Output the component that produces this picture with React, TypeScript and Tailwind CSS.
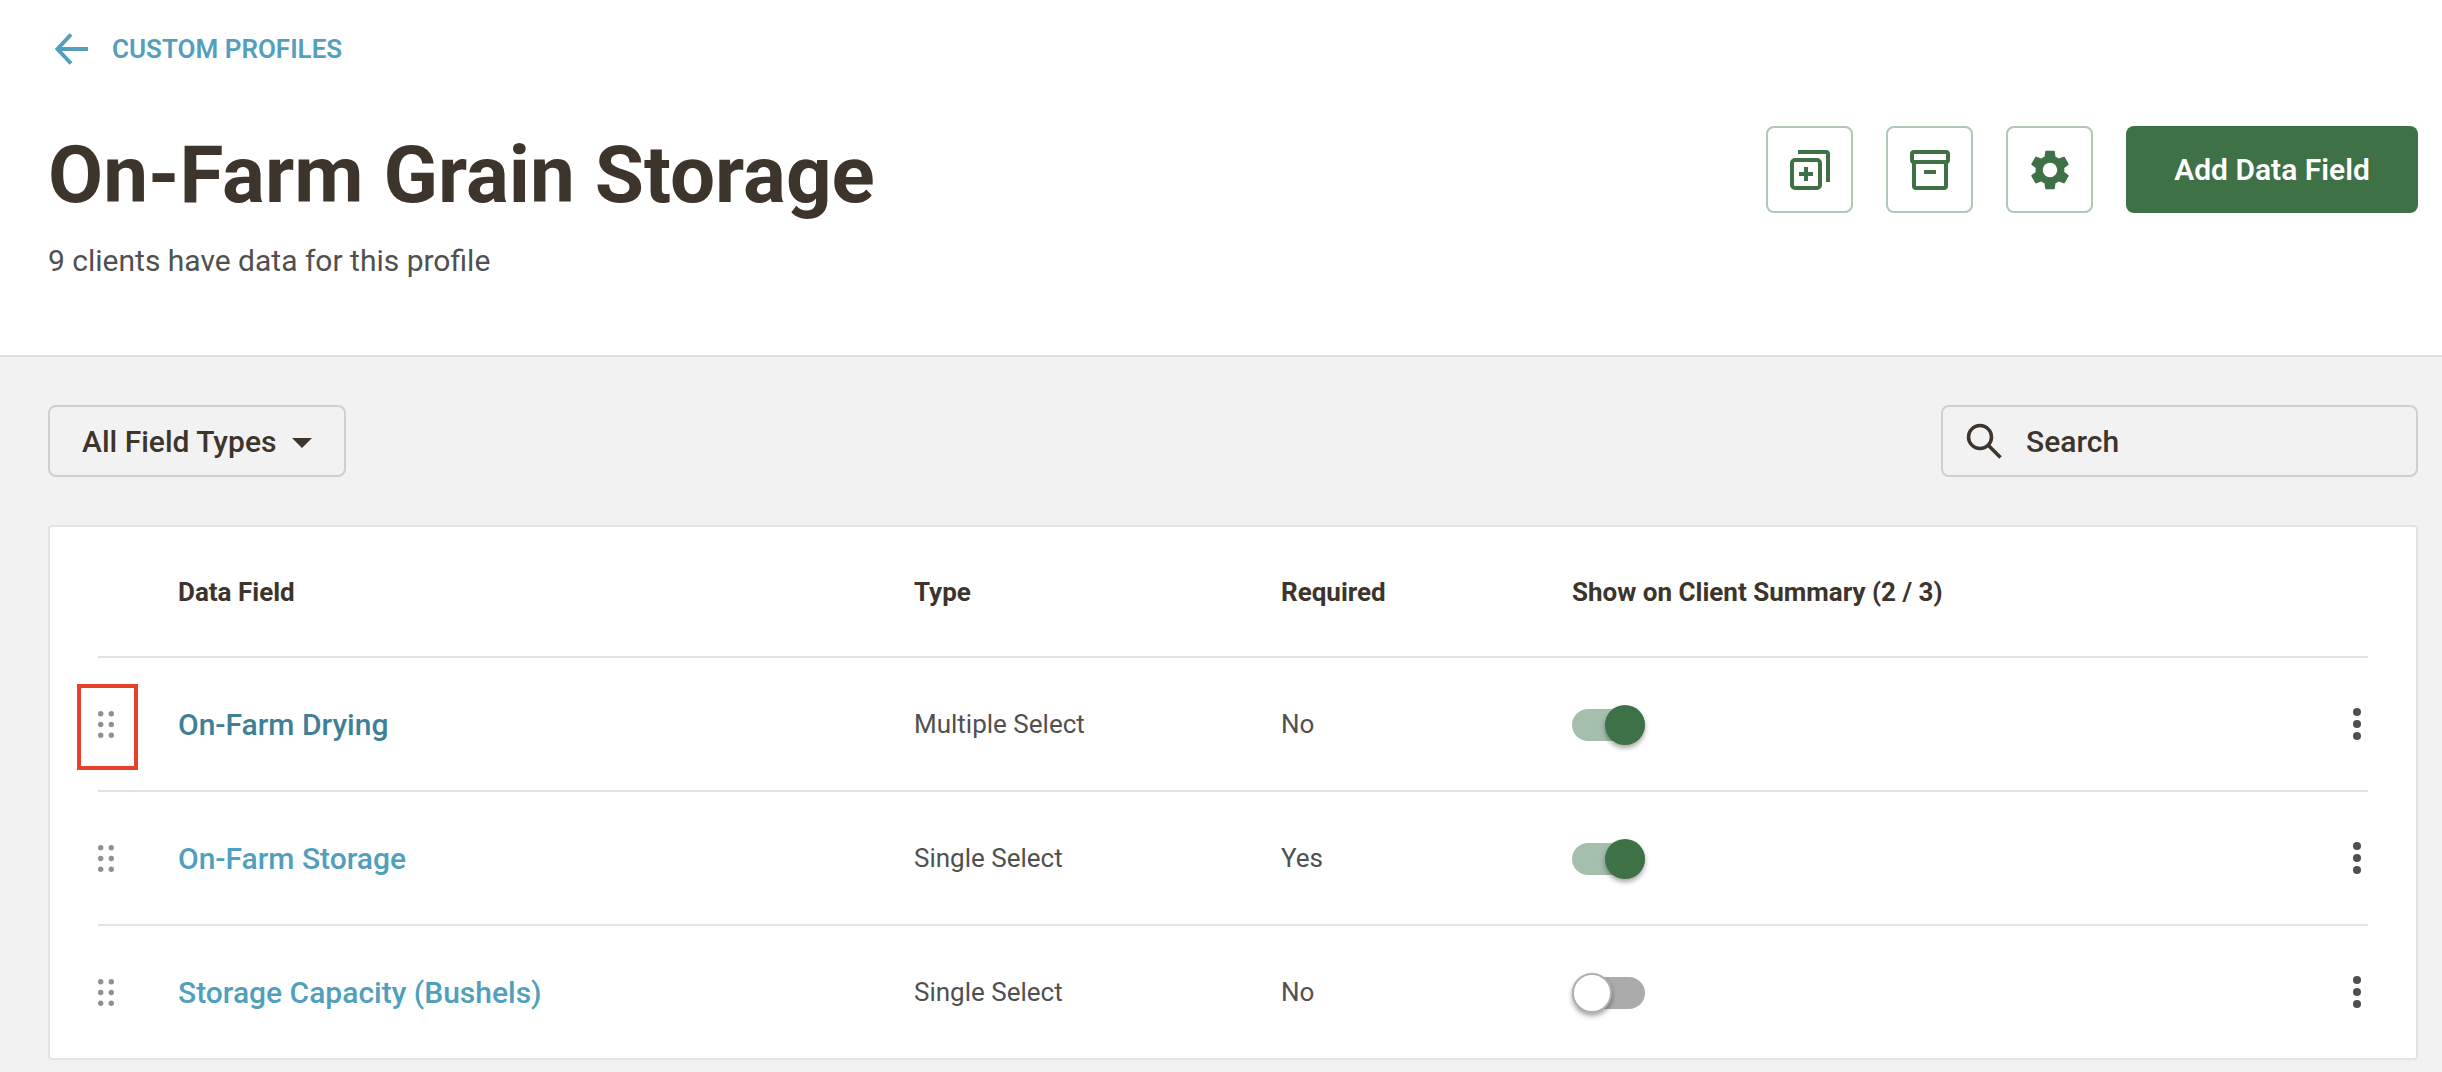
import { MdSettings } from "react-icons/md";

const rows = [
  { name: "On-Farm Drying", type: "Multiple Select", required: "No", on: true, active: true },
  { name: "On-Farm Storage", type: "Single Select", required: "Yes", on: true, active: false },
  { name: "Storage Capacity (Bushels)", type: "Single Select", required: "No", on: false, active: false },
];

function DragDots() {
  return (
    <svg width="16" height="27" viewBox="0 0 16 27" fill="#909090" aria-hidden="true">
      <circle cx="2.700" cy="2.700" r="2.700" />
      <circle cx="13.300" cy="2.700" r="2.700" />
      <circle cx="2.700" cy="13.500" r="2.700" />
      <circle cx="13.300" cy="13.500" r="2.700" />
      <circle cx="2.700" cy="24.300" r="2.700" />
      <circle cx="13.300" cy="24.300" r="2.700" />
    </svg>
  );
}

function Kebab() {
  return (
    <svg width="10" height="32" viewBox="0 0 10 32" fill="#4f4f4f" aria-hidden="true">
      <circle cx="5" cy="4" r="4" />
      <circle cx="5" cy="16" r="4" />
      <circle cx="5" cy="28" r="4" />
    </svg>
  );
}

function Toggle({ on }: { on: boolean }) {
  return (
    <div className={`flex items-center w-[73px] h-[32px] mt-[2px] rounded-full ${on ? "justify-end bg-[#a5bfad]" : "justify-start bg-[#ababab]"}`}>
      <div
        className={`w-[40px] h-[40px] rounded-full shadow-[0_3px_5px_rgba(0,0,0,0.35)] ${
          on ? "bg-[#3e7146]" : "bg-white border-2 border-[#b0b0b0]"
        }`}
      />
    </div>
  );
}

function IconButton({ children }: { children: React.ReactNode }) {
  return (
    <button className="flex items-center justify-center w-[87px] h-[87px] rounded-[8px] border-2 border-[#b0c8b4] bg-white">
      {children}
    </button>
  );
}

export default function App() {
  return (
    <div className="min-h-screen bg-[#f2f2f2] font-['Roboto',sans-serif]">
      {/* Header */}
      <div className="bg-white border-b-2 border-[#e0e0e0] h-[357px] pl-[48px] pr-[24px] pt-[25px]">
        <div className="flex items-center gap-[23px] h-[48px] text-[#559fbd]">
          <svg width="34" height="32" viewBox="0 0 34 32" fill="none" stroke="currentColor" strokeWidth="4" className="ml-[7px]" aria-hidden="true">
            <path d="M33 16H3M16 1.500 2.500 16 16 30.500" />
          </svg>
          <span className="text-[26px] font-semibold uppercase">Custom Profiles</span>
        </div>
        <div className="flex items-start justify-between mt-[53px]">
          <div>
            <h1 className="text-[80px] leading-[94px] font-bold text-[#3d342c] mt-[2px]">On-Farm Grain Storage</h1>
            <p className="text-[30px] leading-[36px] text-[#505050] mt-[21px]">9 clients have data for this profile</p>
          </div>
          <div className="flex items-center gap-[33px]">
            <IconButton>
              <svg width="40" height="40" viewBox="0 0 40 40" fill="none" stroke="#3e7146" strokeWidth="4" aria-hidden="true">
                <path d="M8 2h28a2 2 0 0 1 2 2v28" />
                <rect x="2" y="10" width="28" height="28" rx="3" />
                <path d="M16 17v14M9 24h14" />
              </svg>
            </IconButton>
            <IconButton>
              <svg width="40" height="40" viewBox="0 0 40 40" fill="none" stroke="#3e7146" strokeWidth="4" aria-hidden="true">
                <rect x="2" y="2" width="36" height="10" rx="2" />
                <path d="M4 12v24a2 2 0 0 0 2 2h28a2 2 0 0 0 2-2V12" />
                <path d="M14 22h12" />
              </svg>
            </IconButton>
            <IconButton>
              <MdSettings size={48} color="#3e7146" aria-hidden="true" />
            </IconButton>
            <button className="w-[292px] h-[87px] rounded-[8px] bg-[#3e7146] text-white text-[30px] font-semibold">
              Add Data Field
            </button>
          </div>
        </div>
      </div>

      <div className="pr-[24px] pl-[48px] pt-[48px] pb-[13px]">
        {/* Filters */}
        <div className="flex items-center justify-between">
          <button className="flex items-center justify-between w-[298px] h-[72px] pl-[32px] pr-[32px] rounded-[8px] border-2 border-[#cfcfcf] text-[30px] font-medium text-[#3d342c]">
            All Field Types
            <span className="w-0 h-0 border-x-[10px] border-x-transparent border-t-[10px] border-t-[#3d342c] mt-[3px]" />
          </button>
          <div className="flex items-center gap-[24px] w-[477px] h-[72px] pl-[23px] rounded-[8px] border-2 border-[#cfcfcf] text-[30px] font-medium text-[#3d342c]">
            <svg width="36" height="36" viewBox="0 0 36 36" fill="none" stroke="currentColor" strokeWidth="3.500" aria-hidden="true">
              <circle cx="14" cy="14" r="11.500" />
              <path d="M22.500 22.500 34.500 34.500" />
            </svg>
            Search
          </div>
        </div>

        {/* Table */}
        <div className="mt-[48px] bg-white border-2 border-[#e3e3e3] rounded-[4px] px-[48px]">
          <div className="grid grid-cols-[80px_736px_367px_291px_1fr] items-center h-[129px] pt-[2px] text-[26px] font-bold text-[#3d342c]">
            <div />
            <div>Data Field</div>
            <div>Type</div>
            <div>Required</div>
            <div>Show on Client Summary (2 / 3)</div>
          </div>
          {rows.map((row) => (
            <div
              key={row.name}
              className="grid grid-cols-[80px_736px_367px_291px_1fr] items-center h-[134px] border-t-2 border-[#e3e3e3] text-[26px] text-[#505050]"
            >
              <div className="relative flex items-center h-full">
                <DragDots />
                {row.active && <div className="absolute left-[-21px] top-[26px] w-[61px] h-[86px] border-[4px] border-[#e8412a]" />}
              </div>
              <div className={`text-[30px] font-medium ${row.active ? "text-[#3f7f97]" : "text-[#4f9fbd]"}`}>{row.name}</div>
              <div>{row.type}</div>
              <div>{row.required}</div>
              <div className="flex items-center justify-between pr-[6px]">
                <Toggle on={row.on} />
                <Kebab />
              </div>
            </div>
          ))}
        </div>
      </div>
    </div>
  );
}
